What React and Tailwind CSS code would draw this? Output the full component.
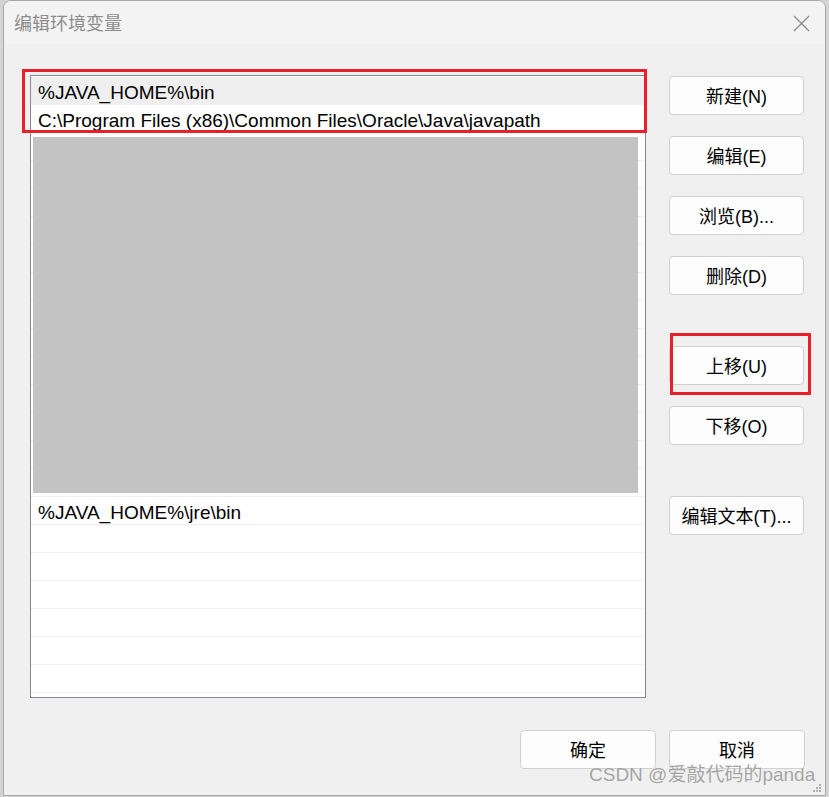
import React from "react";

const LATIN = { fontFamily: '"Liberation Sans", "Noto Sans CJK SC", sans-serif' };
const CJK = { fontFamily: '"Liberation Sans", "Noto Sans CJK SC", sans-serif' };
const TITLE = { fontFamily: '"Noto Sans CJK SC", "Noto Sans", sans-serif' };

function Btn({ children, className = "" }) {
  return (
    <div
      className={
        "flex h-[39px] w-[135px] items-center justify-center rounded-[4px] border border-[#d0d0d0] bg-[#fdfdfd] pt-[3px] text-[18px] text-black " +
        className
      }
      style={CJK}
    >
      {children}
    </div>
  );
}

export default function App() {
  const rows = [
    { text: "%JAVA_HOME%\\bin", sel: true },
    { text: "C:\\Program Files (x86)\\Common Files\\Oracle\\Java\\javapath" },
  ];
  for (let i = 0; i < 13; i++) rows.push({ text: "" });
  rows.push({ text: "%JAVA_HOME%\\jre\\bin" });
  for (let i = 0; i < 7; i++) rows.push({ text: "" });

  return (
    <div className="h-[797px] w-[829px] overflow-hidden bg-[#d4d4d4]">
      <div className="ml-[3px] flex h-[796px] w-[823px] flex-col overflow-hidden rounded-t-[8px] border border-[#a8a8a8] bg-[#f0f0f0]">
        {/* Title bar */}
        <div className="flex h-[43px] shrink-0 items-center justify-between bg-[#f3f3f3] pl-[10px] pr-[15px]">
          <span className="text-[18px] text-[#8c8c8c]" style={TITLE}>
            编辑环境变量
          </span>
          <svg width="17" height="17" viewBox="0 0 17 17" className="mt-[1px]">
            <path d="M1 1 L16 16 M16 1 L1 16" stroke="#8a8a8a" strokeWidth="1.3" fill="none" />
          </svg>
        </div>

        {/* Body */}
        <div className="relative flex flex-1 flex-col">
          <div className="flex pl-[26px] pt-[31px]">
            {/* List box */}
            <div className="relative h-[623px] w-[616px] overflow-hidden border border-[#828790] bg-white pt-px">
              {rows.map((r, i) => (
                <div
                  key={i}
                  className={
                    "flex h-[28px] items-center border-b border-[#efefef] pl-[7px] pt-[4px] text-[19px] text-black " +
                    (r.sel ? "bg-[#efefef]" : "bg-white")
                  }
                  style={LATIN}
                >
                  <span className="whitespace-nowrap leading-none">{r.text}</span>
                </div>
              ))}
              {/* redaction block */}
              <div className="absolute left-[2px] top-[61px] h-[356px] w-[605px] bg-[#c3c3c3]" />
            </div>

            {/* Buttons column */}
            <div className="ml-[23px] flex flex-col pt-px">
              <Btn>新建(N)</Btn>
              <Btn className="mt-[21px]">编辑(E)</Btn>
              <Btn className="mt-[21px]">浏览(B)...</Btn>
              <Btn className="mt-[21px]">删除(D)</Btn>
              <Btn className="mt-[51px]">上移(U)</Btn>
              <Btn className="mt-[21px]">下移(O)</Btn>
              <Btn className="mt-[51px]">编辑文本(T)...</Btn>
            </div>
          </div>

          {/* Bottom buttons */}
          <div className="mt-[32px] flex gap-[13px] pl-[516px]">
            <Btn className="w-[136px]">确定</Btn>
            <Btn className="w-[136px]">取消</Btn>
          </div>

          {/* annotation boxes */}
          <div className="pointer-events-none absolute left-[18px] top-[25px] h-[64px] w-[625px] border-[3px] border-[#e8202a]" />
          <div className="pointer-events-none absolute left-[666px] top-[289px] h-[62px] w-[141px] border-[3px] border-[#e8202a]" />

          {/* watermark */}
          <div
            className="absolute left-[585px] top-[721px] whitespace-nowrap text-[19px] leading-none text-[#a3a3a3]"
            style={{ ...CJK, textShadow: "0 0 1px #ffffff" }}
          >
            CSDN @爱敲代码的panda
          </div>
          {/* resize grip */}
          <div className="absolute right-[4px] bottom-[3px] grid grid-cols-3 gap-[1px]">
            <span className="h-[2px] w-[2px]" />
            <span className="h-[2px] w-[2px]" />
            <span className="h-[2px] w-[2px] bg-[#b0b0b0]" />
            <span className="h-[2px] w-[2px]" />
            <span className="h-[2px] w-[2px] bg-[#b0b0b0]" />
            <span className="h-[2px] w-[2px] bg-[#b0b0b0]" />
            <span className="h-[2px] w-[2px] bg-[#b0b0b0]" />
            <span className="h-[2px] w-[2px] bg-[#b0b0b0]" />
            <span className="h-[2px] w-[2px] bg-[#b0b0b0]" />
          </div>
        </div>
      </div>
    </div>
  );
}
